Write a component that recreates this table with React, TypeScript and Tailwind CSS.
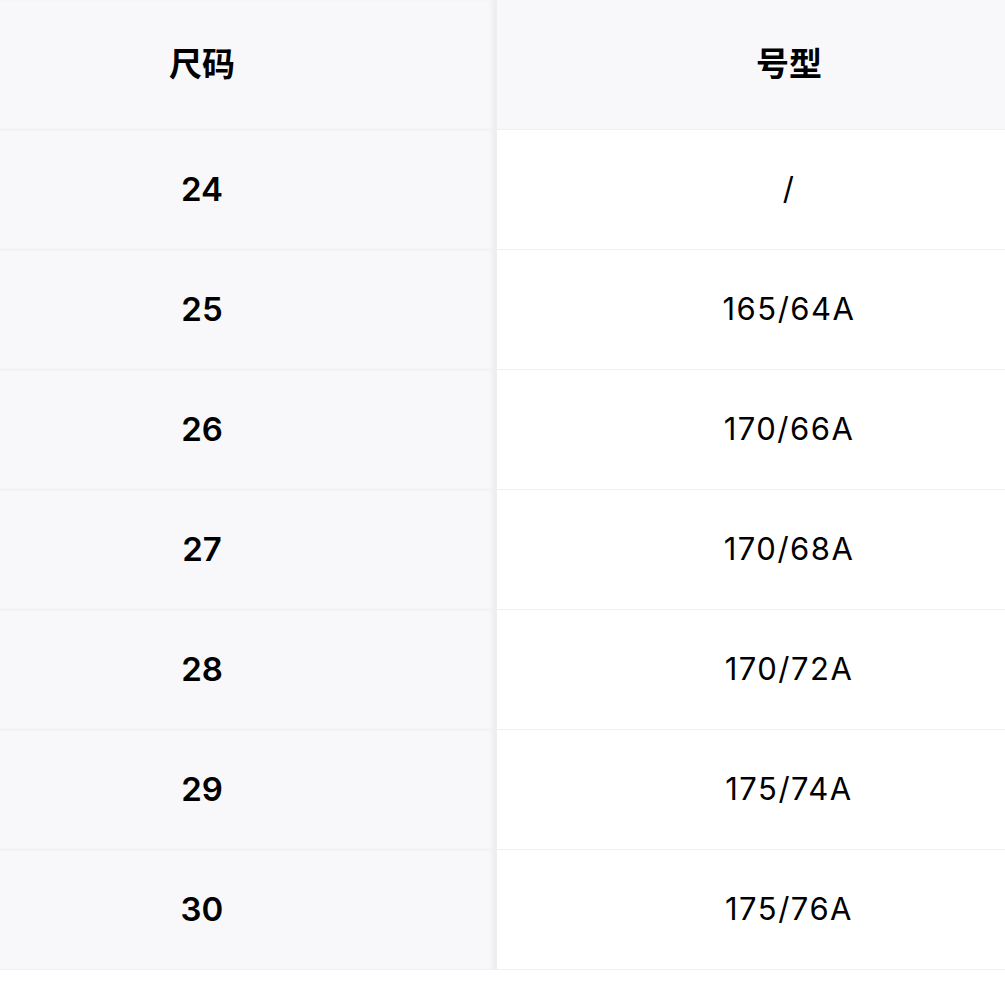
const rows = [
  { size: "24", fit: "/" },
  { size: "25", fit: "165/64A" },
  { size: "26", fit: "170/66A" },
  { size: "27", fit: "170/68A" },
  { size: "28", fit: "170/72A" },
  { size: "29", fit: "175/74A" },
  { size: "30", fit: "175/76A" },
];

const font = { fontFamily: '"Inter", "Noto Sans CJK SC", sans-serif' };

export default function App() {
  return (
    <div className="w-[1005px] h-[1005px] bg-white overflow-hidden" style={font}>
      <div className="grid grid-cols-[497px_1fr] h-[130px] border-b border-[#f0f0f2] bg-[#f8f8fa]">
        <div className="flex items-center justify-center pr-[90px] border-r-[3px] border-[#eeeef0] shadow-[-3px_0_3px_rgba(0,0,0,0.03)_inset]">
          <span className="text-[33px] font-bold text-black">尺码</span>
        </div>
        <div className="flex items-center justify-center pl-[76px]">
          <span className="text-[33px] font-bold text-black">号型</span>
        </div>
      </div>
      {rows.map((r) => (
        <div key={r.size} className="grid grid-cols-[497px_1fr] h-[120px] border-b border-[#f0f0f2]">
          <div className="flex items-center justify-center pr-[90px] bg-[#f8f8fa] border-r-[3px] border-[#eeeef0] shadow-[-3px_0_3px_rgba(0,0,0,0.03)_inset]">
            <span className="text-[33px] font-semibold text-black">{r.size}</span>
          </div>
          <div className="flex items-center justify-center pl-[76px] bg-white">
            <span className="text-[31px] font-normal tracking-[1.5px] text-black">{r.fit}</span>
          </div>
        </div>
      ))}
    </div>
  );
}
